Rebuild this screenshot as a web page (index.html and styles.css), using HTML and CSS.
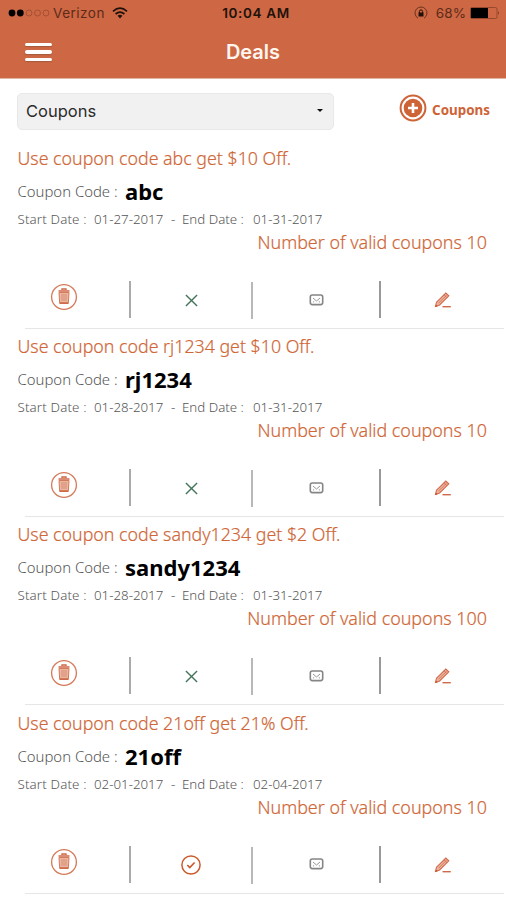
FILE: index.html
```html
<!DOCTYPE html>
<html lang="en">
<head>
    <meta charset="UTF-8">
    <meta name="viewport" content="width=device-width, initial-scale=1.0">
    <title>Deals</title>
    <link rel="stylesheet" href="styles.css">
</head>
<body>

<!-- icons shared by the coupon rows -->
<svg class="sprite">
    <symbol id="trash" viewBox="0 0 28 28">
        <circle cx="14" cy="14" r="12.4" fill="none" stroke="#d57958" stroke-width="1.3"/>
        <path d="M12 7V6h4v1M8.5 8h11" fill="none" stroke="#ce6846" stroke-width="1.4"/>
        <path d="M9 9.5h10l-.7 11H9.7z" fill="#eab7a3" stroke="#d57958" stroke-width="1"/>
        <path d="M12 11v7M14 11v7M16 11v7" stroke="#d57958" stroke-width=".7"/>
        <path d="M10 20h8" stroke="#ce6846" stroke-width="1.6"/>
    </symbol>
    <symbol id="cross" viewBox="0 0 14 14">
        <path d="M1 1l12 12M13 1L1 13" stroke="#44755a" stroke-width="1.5"/>
    </symbol>
    <symbol id="check" viewBox="0 0 20 20">
        <circle cx="10" cy="10" r="9.1" fill="none" stroke="#cb5a2c" stroke-width="1.5"/>
        <path d="M6.3 10l2.5 2.5 4.8-5" fill="none" stroke="#cb5a2c" stroke-width="1.7"/>
    </symbol>
    <symbol id="mail" viewBox="0 0 14 12">
        <rect x=".8" y="1" width="12.4" height="9.6" rx="2" fill="#fff" stroke="#858585" stroke-width="1.6"/>
        <path d="M3.5 4L7 7l3.5-3M3.5 8.3l1.2-1M10.5 8.3l-1.2-1" fill="none" stroke="#8d8d8d" stroke-width=".9"/>
    </symbol>
    <symbol id="pencil" viewBox="0 0 18 16">
        <path d="M1.5 14.5l1-4.3L11.8 1l3 2.8L5.6 13z" fill="#edb5a0" stroke="#d0694a" stroke-width="1.1"/>
        <path d="M4.5 11.2L12.5 3.2M10 2.8l3 3" stroke="#d0694a" stroke-width=".8"/>
        <path d="M1.2 15l.6-2.6 2 1.8z" fill="#c9532d"/>
        <path d="M8.5 14.7h8.3" stroke="#d0694a" stroke-width="1.4"/>
    </symbol>
</svg>

<header class="header">
    <div class="status-bar">
        <div class="carrier">
            <svg class="signal" viewBox="0 0 42 8">
                <circle cx="4" cy="4" r="3.4"/><circle cx="12.3" cy="4" r="3.4"/>
                <g class="signal-off"><circle cx="21" cy="4" r="3"/><circle cx="29.5" cy="4" r="3"/><circle cx="38" cy="4" r="3"/></g>
            </svg>
            <span class="carrier-name">Verizon</span>
            <svg class="wifi" viewBox="0 0 16 12">
                <path d="M1 4.3Q8-2 15 4.3M3.6 7Q8 3.2 12.4 7" fill="none" stroke="#20110b" stroke-width="1.7"/>
                <path d="M5.6 8.7Q8 6.8 10.4 8.7L8 11.5z" fill="#20110b"/>
            </svg>
        </div>
        <div class="time">10:04 AM</div>
        <div class="battery">
            <svg class="lock" viewBox="0 0 14 14">
                <path d="M4 12.2A6 6 0 1 1 10 12.2" fill="none" stroke="#6b321d" stroke-width="1"/>
                <path d="M5.4 7V5.5a1.6 1.6 0 0 1 3.2 0V7" fill="none" stroke="#20110b"/>
                <rect x="4.5" y="6.5" width="5" height="4" fill="#20110b"/>
            </svg>
            <span class="percent">68%</span>
            <svg class="cell" viewBox="0 0 30 12">
                <rect x=".5" y=".5" width="26.5" height="11" rx="1.5" fill="none" stroke="#97482c"/>
                <path d="M1 1h17v10H1z"/>
                <path d="M28 4.2q1.7 1.8 0 3.6z" fill="#5c2b19"/>
            </svg>
        </div>
    </div>
    <div class="nav">
        <div class="menu"><span></span><span></span><span></span></div>
        <h1>Deals</h1>
    </div>
</header>

<div class="toolbar">
    <div class="dropdown">
        <span>Coupons</span>
        <span class="caret"></span>
    </div>
    <div class="add">
        <svg viewBox="0 0 28 28">
            <circle cx="14" cy="14" r="12.4" fill="none" stroke="#ce6336" stroke-width="2"/>
            <circle cx="14" cy="14" r="9.3" fill="#ce6336"/>
            <path d="M14 9v10M9 14h10" stroke="#fff" stroke-width="2.6"/>
        </svg>
        <span>Coupons</span>
    </div>
</div>

<div class="coupon">
    <div class="title"><span>Use coupon code abc get $10 Off.</span></div>
    <div class="code"><span class="label">Coupon Code :</span><b>abc</b></div>
    <div class="dates"><span class="start">Start Date :</span><span class="from">01-27-2017</span><span class="dash">-</span><span class="end">End Date :</span><span>01-31-2017</span></div>
    <div class="valid">Number of valid coupons 10</div>
    <div class="actions">
        <div><svg class="trash"><use href="#trash"/></svg></div>
        <div><svg class="cross"><use href="#cross"/></svg></div>
        <div><svg class="mail"><use href="#mail"/></svg></div>
        <div><svg class="pencil"><use href="#pencil"/></svg></div>
    </div>
</div>

<div class="coupon">
    <div class="title"><span>Use coupon code rj1234 get $10 Off.</span></div>
    <div class="code"><span class="label">Coupon Code :</span><b>rj1234</b></div>
    <div class="dates"><span class="start">Start Date :</span><span class="from">01-28-2017</span><span class="dash">-</span><span class="end">End Date :</span><span>01-31-2017</span></div>
    <div class="valid">Number of valid coupons 10</div>
    <div class="actions">
        <div><svg class="trash"><use href="#trash"/></svg></div>
        <div><svg class="cross"><use href="#cross"/></svg></div>
        <div><svg class="mail"><use href="#mail"/></svg></div>
        <div><svg class="pencil"><use href="#pencil"/></svg></div>
    </div>
</div>

<div class="coupon">
    <div class="title"><span>Use coupon code sandy1234 get $2 Off.</span></div>
    <div class="code"><span class="label">Coupon Code :</span><b>sandy1234</b></div>
    <div class="dates"><span class="start">Start Date :</span><span class="from">01-28-2017</span><span class="dash">-</span><span class="end">End Date :</span><span>01-31-2017</span></div>
    <div class="valid">Number of valid coupons 100</div>
    <div class="actions">
        <div><svg class="trash"><use href="#trash"/></svg></div>
        <div><svg class="cross"><use href="#cross"/></svg></div>
        <div><svg class="mail"><use href="#mail"/></svg></div>
        <div><svg class="pencil"><use href="#pencil"/></svg></div>
    </div>
</div>

<div class="coupon">
    <div class="title"><span>Use coupon code 21off get 21% Off.</span></div>
    <div class="code"><span class="label">Coupon Code :</span><b>21off</b></div>
    <div class="dates"><span class="start">Start Date :</span><span class="from">02-01-2017</span><span class="dash">-</span><span class="end">End Date :</span><span>02-04-2017</span></div>
    <div class="valid">Number of valid coupons 10</div>
    <div class="actions">
        <div><svg class="trash"><use href="#trash"/></svg></div>
        <div><svg class="check"><use href="#check"/></svg></div>
        <div><svg class="mail"><use href="#mail"/></svg></div>
        <div><svg class="pencil"><use href="#pencil"/></svg></div>
    </div>
</div>

</body>
</html>
```

FILE: styles.css
```css
* {
    box-sizing: border-box;
}

body {
    font-family: "Noto Sans", "Open Sans", sans-serif;
    background-color: #fff;
    margin: 0;
    height: 900px;
    overflow: hidden;
}

svg {
    display: block;
    flex: none;
}

.sprite {
    display: none;
}

.header {
    height: 79px;
    background-color: #ce6743;
    border-bottom: 1px solid #e3b5a4;
    font-family: Inter, sans-serif;
}

.status-bar {
    height: 26px;
    padding: 0 6px 0 8px;
    display: grid;
    grid-template-columns: 1fr auto 1fr;
    align-items: center;
    font-size: 13px;
    line-height: 26px;
    color: #20110b;
}

.carrier,
.battery {
    display: flex;
    align-items: center;
}

.battery {
    justify-content: flex-end;
}

.signal {
    width: 42px;
    height: 8px;
    margin-right: 3px;
}

.signal-off {
    fill: none;
    stroke: #a55032;
}

.carrier-name {
    font-size: 13.5px;
    letter-spacing: 0.5px;
    color: #5c2b19;
}

.wifi {
    width: 16px;
    height: 12px;
    margin-left: 7px;
}

.time {
    padding-left: 4px;
    font-size: 13.5px;
    font-weight: 600;
    letter-spacing: 0.65px;
}

.lock {
    width: 14px;
    height: 14px;
    margin-right: 8px;
}

.percent {
    font-size: 13.5px;
    letter-spacing: 0.1px;
    color: #5c2b19;
}

.cell {
    width: 30px;
    height: 12px;
    margin-left: 4px;
}

.nav {
    height: 52px;
    padding: 0 25px;
    display: grid;
    grid-template-columns: 1fr auto 1fr;
    align-items: center;
}

.menu {
    width: 27px;
    display: flex;
    flex-direction: column;
    gap: 4px;
}

.menu span {
    height: 3.5px;
    border-radius: 2px;
    background-color: #fff;
    box-shadow: 0 1px 1px #a65a3e;
}

h1 {
    margin: 0;
    font-size: 20px;
    font-weight: 600;
    color: #fff6f0;
}

.toolbar {
    height: 61px;
    padding: 14px 16px 0 17px;
    display: flex;
    justify-content: space-between;
    align-items: flex-start;
}

.dropdown {
    width: 317px;
    height: 37px;
    padding: 0 10px 2px 8px;
    display: flex;
    justify-content: space-between;
    align-items: center;
    background-color: #f1f1f1;
    border: 1px solid #e8e8e8;
    border-radius: 5px;
    font-family: Inter, sans-serif;
    font-size: 16.5px;
    color: #2b2b2b;
}

.caret {
    border: 3px solid transparent;
    border-top: 3px solid #111;
    border-bottom: 0;
}

.add {
    height: 30px;
    display: flex;
    align-items: center;
    gap: 5px;
    font-size: 13.4px;
    font-weight: 700;
    color: #ce6336;
}

.add span {
    padding-top: 3px;
}

.add svg {
    width: 28px;
    height: 28px;
}

.coupon {
    height: 188.2px;
}

/* the row divider starts further in than the text */
.coupon::after {
    content: "";
    display: block;
    height: 1px;
    margin: 0 2px 0 25px;
    background-color: #e6e6e6;
}

.title {
    height: 36px;
    padding-left: 17.5px;
    font-size: 17.8px;
    font-weight: 300;
    line-height: 36px;
    color: #cf6738;
    -webkit-text-stroke: 0.2px;
}

.code {
    height: 30px;
    padding-left: 17.5px;
    display: flex;
    line-height: 30px;
}

.label {
    width: 107.5px;
    font-size: 14.9px;
    font-weight: 300;
    color: #555;
    white-space: nowrap;
}

.code b {
    font-size: 22px;
    color: #000;
}

.dates {
    height: 25px;
    padding-left: 17.5px;
    display: flex;
    font-size: 13.3px;
    font-weight: 300;
    line-height: 26px;
    color: #555;
    white-space: nowrap;
}

.start {
    width: 76.5px;
    letter-spacing: 0.15px;
}

.from {
    width: 77px;
}

.dash {
    width: 11px;
}

.end {
    width: 71px;
}

.valid {
    height: 22px;
    padding-right: 19px;
    text-align: right;
    font-size: 17.9px;
    font-weight: 300;
    line-height: 22px;
    color: #cf6738;
    -webkit-text-stroke: 0.2px;
}

.actions {
    height: 75px;
    padding-top: 28px;
    display: grid;
    grid-template-columns: 131px 122px 128px 125px;
}

.actions div {
    height: 37px;
    display: flex;
    justify-content: center;
    align-items: center;
    border-right: 2px solid #999;
}

.actions div:first-child {
    border-color: #aaa;
    align-items: flex-start;
    padding: 2px 1px 0 0;
}

.actions div:nth-child(2) {
    margin-top: 1px;
    border-color: #b8b8b8;
}

.actions div:nth-child(3) {
    padding-left: 1px;
}

.actions div:last-child {
    padding: 1px 2px 0 0;
    border: 0;
}

.trash {
    width: 28px;
    height: 28px;
}

.cross {
    width: 13px;
    height: 13px;
}

.check {
    width: 20px;
    height: 20px;
}

.mail {
    width: 15px;
    height: 12px;
}

.pencil {
    width: 18px;
    height: 16px;
}
```
